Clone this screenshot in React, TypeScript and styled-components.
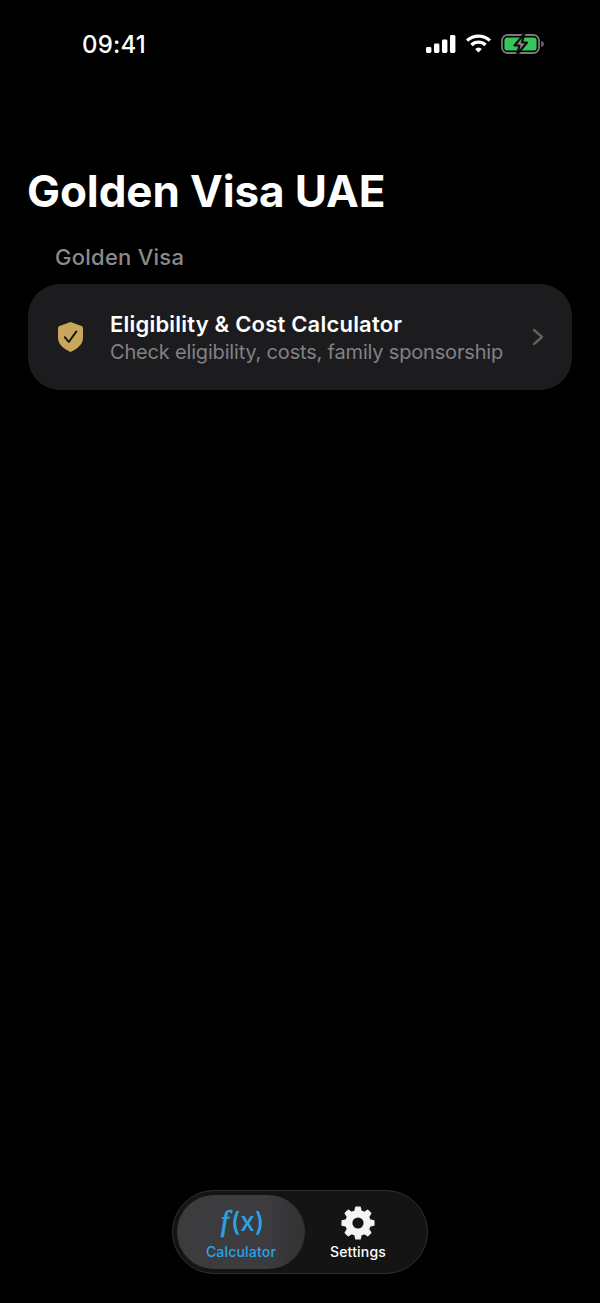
import React from "react";
import styled, { createGlobalStyle } from "styled-components";

const Global = createGlobalStyle`
  html, body { margin: 0; padding: 0; background: #000; }
  body { font-family: Inter, "Liberation Sans", sans-serif; color: #fff; }
`;

const Screen = styled.div`
  width: 600px;
  height: 1303px;
  background: #000;
  display: flex;
  flex-direction: column;
  overflow: hidden;
`;

const StatusBar = styled.div`
  display: flex;
  align-items: center;
  justify-content: space-between;
  height: 24px;
  margin-top: 32px;
  padding: 0 55px 0 82px;
`;

const Clock = styled.span`
  font-size: 24px;
  font-weight: 500;
  line-height: 26px;
  letter-spacing: 0.2px;
  padding-top: 1px;
`;

const StatusIcons = styled.div`
  display: flex;
  align-items: center;
  gap: 9px;
  padding-bottom: 1px;
`;

const Title = styled.h1`
  margin: 107px 0 0 27px;
  font-size: 44px;
  line-height: 56px;
  font-weight: 700;
  letter-spacing: -0.1px;
`;

const SectionLabel = styled.div`
  margin: 24px 0 0 55px;
  font-size: 22px;
  line-height: 28px;
  font-weight: 500;
  letter-spacing: 0.25px;
  color: #8a8a8e;
`;

const Card = styled.div`
  margin: 13px 28px 0;
  height: 106px;
  border-radius: 32px;
  background: #1c1c1e;
  display: flex;
  align-items: center;
  padding: 0 28px 0 29px;
  box-sizing: border-box;
`;

const ShieldSlot = styled.div`
  width: 27px;
  height: 32px;
  margin-right: 26px;
  flex: none;
`;

const CardText = styled.div`
  flex: 1;
  min-width: 0;
  padding-top: 2px;
`;

const CardTitle = styled.div`
  font-size: 22px;
  line-height: 28px;
  font-weight: 600;
  letter-spacing: 0.21px;
  color: #fff;
`;

const CardSub = styled.div`
  font-size: 20px;
  line-height: 28px;
  letter-spacing: -0.18px;
  color: #818186;
  white-space: nowrap;
`;

const Spacer = styled.div`
  flex: 1;
`;

const TabBar = styled.nav`
  align-self: center;
  width: 256px;
  height: 84px;
  margin-bottom: 29px;
  box-sizing: border-box;
  border: 1.5px solid #303032;
  border-radius: 42px;
  background: #141415;
  padding: 4px;
  display: flex;
  align-items: stretch;
`;

const Tab = styled.div<{ $active?: boolean }>`
  width: ${p => (p.$active ? "128px" : "106px")};
  border-radius: 37px;
  display: flex;
  flex-direction: column;
  align-items: center;
  justify-content: flex-end;
  padding-bottom: 9px;
  box-sizing: border-box;
  color: ${p => (p.$active ? "#2ba3e6" : "#fff")};
  background: ${p => (p.$active ? "linear-gradient(90deg, #3c3c3e, #3c3c3e 70%, #323234)" : "transparent")};
`;

const TabGlyph = styled.div`
  height: 36px;
  display: flex;
  align-items: center;
  justify-content: center;
  margin-bottom: 3px;
`;

const Formula = styled.span`
  font-size: 26px;
  line-height: 36px;
  font-weight: 500;
  padding: 0 0 3px 3px;
`;

const FormulaF = styled.i`
  font-family: "Liberation Serif", serif;
  font-size: 29px;
  font-weight: 400;
  -webkit-text-stroke: 0.7px currentColor;
  margin-right: 2px;
`;

const TabLabel = styled.span`
  font-size: 14px;
  line-height: 16px;
  font-weight: 500;
  letter-spacing: 0.2px;
`;

const Signal = () => (
  <svg width="30" height="18" viewBox="0 0 30 18" fill="#fff">
    <rect x="0" y="12" width="5.4" height="6" rx="1.4" />
    <rect x="8" y="8.5" width="5.4" height="9.5" rx="1.4" />
    <rect x="16" y="4.5" width="5.4" height="13.5" rx="1.4" />
    <rect x="24" y="0" width="5.4" height="18" rx="1.4" />
  </svg>
);

const Wifi = () => (
  <svg width="27" height="19" viewBox="0 0 26 19" fill="none" stroke="#fff" strokeWidth="3.2">
    <path d="M1.6 6.6 A16.5 16.5 0 0 1 24.4 6.6" />
    <path d="M6 11 A10.2 10.2 0 0 1 20 11" />
    <path d="M13 18.6 L9.6 15 A5 5 0 0 1 16.4 15 Z" fill="#fff" stroke="none" />
  </svg>
);

const Battery = () => (
  <svg width="44" height="24" viewBox="0 0 44 24">
    <rect x="1" y="3" width="37" height="18" rx="5.5" fill="none" stroke="#77797a" strokeWidth="1.8" />
    <rect x="3.4" y="5.4" width="32.2" height="13.2" rx="3.2" fill="#35c759" />
    <path d="M40 9 C42.4 9.5 43 10.5 43 12 C43 13.5 42.4 14.5 40 15 Z" fill="#5e5e5e" />
    <path
      d="M23.5 1.5 L13.5 13.5 H18.5 L16 22.5 L26 10.5 H21 Z"
      fill="#8a8a8a"
      stroke="#0c0c0c"
      strokeWidth="2.2"
      strokeLinejoin="round"
    />
  </svg>
);

const Shield = () => (
  <svg width="27" height="32" viewBox="0 0 27 32">
    <path
      d="M13.5 1 L24.5 5 Q26 5.6 26 7.2 V17 C26 23.5 20 28 13.5 31 C7 28 1 23.5 1 17 V7.2 Q1 5.6 2.5 5 Z"
      fill="#c9a75a"
    />
    <path d="M7.8 16.2 L11.8 21 L19.4 10.4" fill="none" stroke="#111" strokeWidth="1.9" strokeLinecap="round" strokeLinejoin="round" />
  </svg>
);

const Chevron = () => (
  <svg width="12" height="18" viewBox="0 0 12 18" fill="none" stroke="#5f5f61" strokeWidth="2.4" strokeLinecap="round" strokeLinejoin="round">
    <path d="M2 2 L10 9 L2 16" />
  </svg>
);

const gearPath = (() => {
  const cx = 18;
  const cy = 18;
  const teeth = 8;
  const outer = 16;
  const root = 12.2;
  const pts: string[] = [];
  const step = (Math.PI * 2) / teeth;
  for (let i = 0; i < teeth; i++) {
    const a = i * step - Math.PI / 2;
    const spots: [number, number][] = [
      [a - step * 0.32, root],
      [a - step * 0.17, outer],
      [a + step * 0.17, outer],
      [a + step * 0.32, root],
    ];
    for (const [t, r] of spots) {
      pts.push(`${(cx + r * Math.cos(t)).toFixed(2)} ${(cy + r * Math.sin(t)).toFixed(2)}`);
    }
  }
  return `M${pts.join("L")}Z`;
})();

const Gear = () => (
  <svg width="36" height="36" viewBox="0 0 36 36">
    <path d={gearPath} fill="#f5f5f5" stroke="#f5f5f5" strokeWidth="1.4" strokeLinejoin="round" />
    <circle cx="18" cy="18" r="5.6" fill="#141415" />
  </svg>
);

export default function App() {
  return (
    <>
      <Global />
      <Screen>
        <StatusBar>
          <Clock>09:41</Clock>
          <StatusIcons>
            <Signal />
            <Wifi />
            <Battery />
          </StatusIcons>
        </StatusBar>
        <Title>Golden Visa UAE</Title>
        <SectionLabel>Golden Visa</SectionLabel>
        <Card>
          <ShieldSlot>
            <Shield />
          </ShieldSlot>
          <CardText>
            <CardTitle>Eligibility &amp; Cost Calculator</CardTitle>
            <CardSub>Check eligibility, costs, family sponsorship</CardSub>
          </CardText>
          <Chevron />
        </Card>
        <Spacer />
        <TabBar>
          <Tab $active>
            <TabGlyph>
              <Formula>
                <FormulaF>f</FormulaF>(x)
              </Formula>
            </TabGlyph>
            <TabLabel>Calculator</TabLabel>
          </Tab>
          <Tab>
            <TabGlyph>
              <Gear />
            </TabGlyph>
            <TabLabel>Settings</TabLabel>
          </Tab>
        </TabBar>
      </Screen>
    </>
  );
}
